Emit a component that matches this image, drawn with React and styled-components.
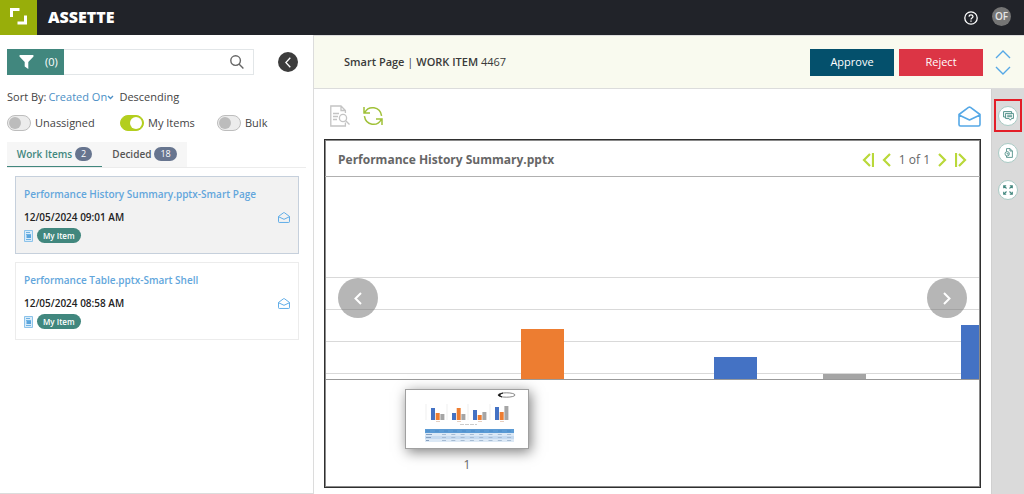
import React, { useState } from "react";
import styled, { createGlobalStyle, css } from "styled-components";

const GlobalStyle = createGlobalStyle`
  * {
    box-sizing: border-box;
  }
  body {
    margin: 0;
    background-color: #fff;
    color: #444;
    font-family: "Open Sans", "Noto Sans", sans-serif;
    font-size: 11px;
    line-height: 16px;
  }
  button, input, select {
    font: inherit;
    color: inherit;
    margin: 0;
    padding: 0;
    border: none;
    background: none;
  }
  button {
    cursor: pointer;
  }
  svg {
    display: block;
  }
`;

const Page = styled.div`
  display: flex;
  flex-direction: column;
  min-height: 100vh;
`;

const Header = styled.header`
  display: flex;
  align-items: center;
  height: 35px;
  padding-right: 13px;
  background: #212329;
  color: #fff;
`;

const LogoBox = styled.div`
  width: 37px;
  height: 35px;
  background: #98ae0a;
`;

const Brand = styled.h1`
  flex: 1;
  margin: 0 0 2px 11px;
  font-size: 16px;
  font-weight: 800;
  line-height: 20px;
`;

const Avatar = styled.button`
  width: 19px;
  height: 19px;
  margin: 0 0 2px 14px;
  border-radius: 50%;
  background: #757575;
  color: #e6e6e6;
  font-size: 10px;
  font-weight: 600;
  line-height: 19px;
`;

const Body = styled.div`
  display: flex;
  flex: 1;
`;

const Sidebar = styled.aside`
  width: 314px;
  flex-shrink: 0;
  padding: 14px 7px 0;
  border-right: 1px solid #dcdcdc;
  border-bottom: 1px solid #dcdcdc;
`;

const SearchRow = styled.div`
  display: flex;
  align-items: center;
  justify-content: space-between;
  padding-right: 8px;
`;

const SearchBox = styled.div`
  display: flex;
  align-items: center;
  width: 247px;
  height: 26px;
  padding-right: 9px;
  border: 1px solid #e2e6e8;
  border-left: none;
`;

const FilterButton = styled.button`
  display: flex;
  align-items: center;
  gap: 11px;
  width: 57px;
  height: 26px;
  padding-left: 12px;
  background: #41877e;
  color: #fff;
`;

const SearchInput = styled.input`
  flex: 1;
  min-width: 0;
  padding: 0 8px;
  outline: none;
`;

const CollapseButton = styled.button`
  display: flex;
  align-items: center;
  justify-content: center;
  width: 20px;
  height: 20px;
  border-radius: 50%;
  background: #3c3c3c;
  color: #fff;
`;

const SortRow = styled.div`
  display: flex;
  align-items: center;
  margin-top: 14px;
`;

const SortSelect = styled.select`
  appearance: none;
  margin: 0 0 0 2px;
  color: #4c8fc6;
  outline: none;
`;

const SortOrder = styled.button`
  margin-left: 5px;
`;

const ToggleRow = styled.div`
  display: grid;
  grid-template-columns: 113px 97px auto;
  margin-top: 10px;
`;

const ToggleLabel = styled.label`
  display: flex;
  align-items: center;
  gap: 4px;
`;

const Switch = styled.input`
  appearance: none;
  display: flex;
  align-items: center;
  width: 24px;
  height: 16px;
  padding: 0 1px;
  border: 1px solid #bdbdbd;
  border-radius: 8px;
  background: #ececec;

  &::before {
    content: "";
    width: 12px;
    height: 12px;
    border-radius: 50%;
    background: #bcbcbc;
  }
  &:checked {
    justify-content: flex-end;
    border-color: #b3ce1e;
    background: #b3ce1e;
  }
  &:checked::before {
    background: #fff;
  }
`;

const Tabs = styled.div`
  display: flex;
  margin-top: 11px;
  border-bottom: 1px solid #ececec;
`;

const Tab = styled.button`
  display: flex;
  align-items: center;
  justify-content: center;
  gap: 3px;
  width: ${props => props.$width}px;
  height: 25px;
  background: #f6f6f6;
  border-bottom: 1px solid transparent;
  color: #555;
  font-size: 10px;
  font-weight: 600;
  ${props =>
    props.$active &&
    css`
      border-bottom-color: #41877e;
      color: #41877e;
    `}
`;

const Badge = styled.span`
  padding: 0 6px;
  border-radius: 7px;
  background: #67758f;
  color: #fff;
  font-size: 9px;
  font-weight: 400;
  line-height: 14px;
`;

const CardList = styled.div`
  display: flex;
  flex-direction: column;
  gap: 8px;
  padding: 8px 0 8px 8px;
  width: 292px;
`;

const Card = styled.article`
  display: flex;
  flex-direction: column;
  height: 78px;
  padding: 9px 8px 0;
  border: 1px solid ${props => (props.$selected ? "#c6d0dc" : "#ececec")};
  background: ${props => (props.$selected ? "#f2f2f2" : "#fff")};
`;

const CardTitle = styled.a`
  color: #62a6dc;
  font-size: 10px;
  font-weight: 600;
  text-decoration: none;
`;

const CardDate = styled.div`
  display: flex;
  align-items: center;
  justify-content: space-between;
  margin-top: 7px;
  color: #222;
  font-size: 10px;
  font-weight: 600;
`;

const CardTags = styled.div`
  display: flex;
  align-items: center;
  gap: 4px;
  margin-top: 3px;
`;

const Pill = styled.span`
  padding: 0 6px;
  border-radius: 8px;
  background: #41877e;
  color: #fff;
  font-size: 8px;
  font-weight: 600;
  line-height: 15px;
`;

const Main = styled.main`
  display: flex;
  flex-direction: column;
  flex: 1;
  min-width: 0;
`;

const ActionBar = styled.div`
  display: flex;
  align-items: center;
  height: 54px;
  padding: 0 13px 0 30px;
  border-top: 1px solid #ddd;
  border-bottom: 1px solid #dcdcdc;
  background: #f9faef;
`;

const ItemName = styled.div`
  flex: 1;
  color: #3a3a3a;

  b {
    font-weight: 600;
  }
`;

const ActionButton = styled.button`
  width: 84px;
  height: 27px;
  margin-left: 5px;
  background: ${props => (props.$danger ? "#dc3545" : "#04506c")};
  color: #fff;
`;

const Stepper = styled.div`
  display: flex;
  flex-direction: column;
  gap: 7px;
  margin-left: 12px;
`;

const Content = styled.div`
  display: flex;
  flex: 1;
`;

const Workspace = styled.div`
  display: flex;
  flex-direction: column;
  flex: 1;
  min-width: 0;
  padding: 16px 10px 6px;
`;

const Toolbar = styled.div`
  display: flex;
  align-items: center;
  gap: 13px;
  height: 22px;
  padding: 0 0 0 6px;

  button:last-child {
    margin-left: auto;
  }
`;

const Viewer = styled.section`
  display: flex;
  flex-direction: column;
  flex: 1;
  margin-top: 12px;
  border: 1px solid #2f2f2f;
  box-shadow: inset 0 0 0 1px #8a8a8a;
`;

const ViewerHeader = styled.div`
  display: flex;
  align-items: center;
  justify-content: space-between;
  height: 37px;
  padding: 4px 13px 0;
  border-bottom: 1px solid #b0b0b0;
`;

const ViewerTitle = styled.h2`
  margin: 0;
  color: #666;
  font-size: 12px;
  font-weight: 700;
`;

const Pager = styled.div`
  display: flex;
  align-items: center;
  gap: 8px;
  color: #666;
  font-size: 12px;
`;

const Stage = styled.div`
  position: relative;
  height: 203px;
  margin: 0 1px;
  overflow: hidden;
`;

const SlideButton = styled.button`
  position: absolute;
  top: 101px;
  ${props => props.$side}: 12px;
  display: flex;
  align-items: center;
  justify-content: center;
  width: 40px;
  height: 40px;
  border-radius: 50%;
  background: rgba(110, 110, 110, 0.5);
  color: #fff;
`;

const Thumbs = styled.div`
  padding: 9px 0 10px 80px;
`;

const Thumb = styled.button`
  display: flex;
  flex-direction: column;
  align-items: center;
  gap: 8px;
  color: #666;
  font-size: 12px;
`;

const Slide = styled.div`
  width: 124px;
  height: 60px;
  border: 1px solid #a0a0a0;
  background: #fff;
  box-shadow: 2px 3px 12px rgba(0, 0, 0, 0.5);
`;

const Rail = styled.nav`
  display: flex;
  flex-direction: column;
  align-items: center;
  gap: 4px;
  width: 33px;
  padding-top: 10px;
  border-left: 1px solid #d0d0d0;
  background: #dadada;
`;

const RailItem = styled.button`
  display: flex;
  align-items: center;
  justify-content: center;
  width: 28px;
  height: 33px;
  border: 2px solid ${props => (props.$marked ? "#e31e28" : "transparent")};
`;

const RailDisc = styled.span`
  display: flex;
  align-items: center;
  justify-content: center;
  width: 20px;
  height: 20px;
  border: 1px solid #a9cbc5;
  border-radius: 50%;
  background: #fff;
  color: #41877e;
`;

const Stroke = ({ w, h, box, width = 1, color = "currentColor", children }) => (
  <svg
    width={w}
    height={h}
    viewBox={box || `0 0 ${w} ${h}`}
    fill="none"
    stroke={color}
    strokeWidth={width}
    aria-hidden="true"
  >
    {children}
  </svg>
);

const Envelope = ({ w, h, width }) => (
  <Stroke w={w} h={h} box="0 0 23 21" width={width} color="#55a8e6">
    <path
      d="M1 8.5 10.5 1.4Q11.5.8 12.5 1.4L22 8.5V18.5Q22 20 20.5 20H2.5Q1 20 1 18.5ZM1 9 11.5 14 22 9"
      strokeLinejoin="round"
    />
  </Stroke>
);

const DocIcon = () => (
  <svg width="9" height="12" viewBox="0 0 9 12" aria-hidden="true">
    <path d="M.5 .5H8.5V11.5H.5Z" fill="#d9ecfa" stroke="#8cc3ea" />
    <path d="M2 2.5H6M2 4.5H7M2 9.5H7" stroke="#6fb2e2" />
    <path d="M2.5 5H7V8H2.5Z" fill="#5aa5dd" />
  </svg>
);

const BLUE = "#4472c4";
const ORANGE = "#ed7d31";
const GRAY = "#a5a5a5";

const gridLines = [100, 132, 164, 196];

const bars = [
  { x: 195, y: 152, color: ORANGE },
  { x: 388, y: 180, color: BLUE },
  { x: 497, y: 197, color: GRAY },
  { x: 635, y: 148, color: BLUE }
];

const miniGroups = [
  { x: 25, heights: [12, 7, 6] },
  { x: 46, heights: [7, 12, 6] },
  { x: 67, heights: [10, 5, 8] },
  { x: 89, heights: [13, 8, 14] }
];

const items = [
  { title: "Performance History Summary.pptx-Smart Page", date: "12/05/2024 09:01 AM" },
  { title: "Performance Table.pptx-Smart Shell", date: "12/05/2024 08:58 AM" }
];

const Chart = () => (
  <svg width="100%" height="203" role="img" aria-label="Performance chart">
    {gridLines.map(y => (
      <rect key={y} x="0" y={y} width="100%" height="1" fill="#d9d9d9" />
    ))}
    {bars.map(bar => (
      <rect
        key={bar.x}
        x={bar.x}
        y={bar.y}
        width="43"
        height={202 - bar.y}
        fill={bar.color}
      />
    ))}
    <rect x="0" y="202" width="100%" height="1" fill="#999" />
  </svg>
);

const SlidePreview = () => (
  <svg width="122" height="58" viewBox="0 0 122 58" aria-hidden="true">
    <ellipse cx="100.5" cy="5" rx="8.5" ry="2.2" fill="none" stroke="#555" strokeWidth=".7" />
    <path d="M97 3Q88 5 96 7Q91.5 5 97 3Z" fill="#111" stroke="#111" strokeWidth=".6" />
    {miniGroups.map(group =>
      group.heights.map((height, i) => (
        <rect
          key={`${group.x}-${i}`}
          x={group.x + i * 4.7}
          y={30 - height}
          width="4"
          height={height}
          fill={[BLUE, ORANGE, GRAY][i]}
        />
      ))
    )}
    <path d="M20 14V30M41 14V30M62 14V30M84 14V30" stroke="#ddd" strokeWidth=".5" />
    <path d="M30 31.5H34M51 31.5H55M72 31.5H76M94 31.5H98" stroke="#e6cfc0" />
    <path d="M54 34.5H71" stroke="#ccc" strokeDasharray="4 1" />
    <rect x="19" y="39" width="89" height="4" fill="#5b9bd5" />
    <rect x="19" y="43" width="89" height="9" fill="#dce9f6" />
    <rect x="19" y="46" width="89" height="3" fill="#c5daf0" />
    <path d="M20 44.5H26M20 47.5H25M20 50.5H23" stroke="#86a0c0" />
    <path
      d="M36 44.5H107M36 47.5H107M36 50.5H107"
      stroke="#a6bcd4"
      strokeDasharray="4 5.3"
    />
    <path d="M20 41H107" stroke="#4c8bc8" strokeDasharray="4 5" />
  </svg>
);

const App = () => {
  const [toggles, setToggles] = useState({
    Unassigned: false,
    "My Items": true,
    Bulk: false
  });

  return (
    <Page>
      <GlobalStyle />
      <Header>
        <LogoBox>
          <Stroke w={37} h={35} width={3} color="#fff">
            <path d="M11.5 17V9.5H19.5M25.5 15.5V23H17.5" />
          </Stroke>
        </LogoBox>
        <Brand>ASSETTE</Brand>
        <button type="button" aria-label="Help">
          <Stroke w={14} h={14} width={1.3}>
            <circle cx="7" cy="7" r="6.2" />
            <path d="M5 5.6Q5.1 3.8 7 3.8T9 5.5Q9 6.3 8 7T7 8.5M7 9.5V10.8" />
          </Stroke>
        </button>
        <Avatar type="button">OF</Avatar>
      </Header>

      <Body>
        <Sidebar>
          <SearchRow>
            <SearchBox>
              <FilterButton type="button">
                <svg width="15" height="14" viewBox="0 0 15 14" aria-hidden="true">
                  <path d="M.8 0H14.2Q15 1 14.3 1.8L9.3 7V14L5.7 11.5V7L.7 1.8Q0 1 .8 0Z" fill="#fff" />
                </svg>
                (0)
              </FilterButton>
              <SearchInput type="text" aria-label="Search" />
              <Stroke w={14} h={14} width={1.4} color="#666">
                <circle cx="5.6" cy="5.6" r="4.8" />
                <path d="M9 9 13.4 13.4" />
              </Stroke>
            </SearchBox>
            <CollapseButton type="button" aria-label="Collapse">
              <Stroke w={6} h={11} width={1.3}>
                <path d="M5.3 .7.8 5.5 5.3 10.3" />
              </Stroke>
            </CollapseButton>
          </SearchRow>

          <SortRow>
            <label htmlFor="sort">Sort By:</label>
            <SortSelect id="sort">
              <option>Created On</option>
            </SortSelect>
            <Stroke w={7} h={5} width={1.3} color="#4c8fc6">
              <path d="M1 1 3.5 3.5 6 1" />
            </Stroke>
            <SortOrder type="button">Descending</SortOrder>
          </SortRow>

          <ToggleRow>
            {Object.keys(toggles).map(name => (
              <ToggleLabel key={name}>
                <Switch
                  type="checkbox"
                  checked={toggles[name]}
                  onChange={event =>
                    setToggles({ ...toggles, [name]: event.target.checked })
                  }
                />
                {name}
              </ToggleLabel>
            ))}
          </ToggleRow>

          <Tabs role="tablist">
            <Tab type="button" role="tab" aria-selected="true" $width={95} $active>
              Work Items <Badge>2</Badge>
            </Tab>
            <Tab type="button" role="tab" aria-selected="false" $width={85}>
              Decided <Badge>18</Badge>
            </Tab>
          </Tabs>

          <CardList>
            {items.map((item, index) => (
              <Card key={item.title} $selected={index === 0}>
                <CardTitle href="#">{item.title}</CardTitle>
                <CardDate>
                  {item.date}
                  <Envelope w={12} h={11} width={1.8} />
                </CardDate>
                <CardTags>
                  <DocIcon />
                  <Pill>My Item</Pill>
                </CardTags>
              </Card>
            ))}
          </CardList>
        </Sidebar>

        <Main>
          <ActionBar>
            <ItemName>
              <b>Smart Page</b> | <b>WORK ITEM</b> 4467
            </ItemName>
            <ActionButton type="button">Approve</ActionButton>
            <ActionButton type="button" $danger>
              Reject
            </ActionButton>
            <Stepper>
              <button type="button" aria-label="Previous item">
                <Stroke w={16} h={9} width={1.4} color="#55a8e6">
                  <path d="M1 8 8 1 15 8" />
                </Stroke>
              </button>
              <button type="button" aria-label="Next item">
                <Stroke w={16} h={9} width={1.4} color="#55a8e6">
                  <path d="M1 1 8 8 15 1" />
                </Stroke>
              </button>
            </Stepper>
          </ActionBar>

          <Content>
            <Workspace>
              <Toolbar>
                <button type="button" aria-label="Preview">
                  <Stroke w={20} h={22} width={1.3} color="#c4c4c4">
                    <path d="M15.4 8V5.5L11 1H.8V21H15.4V17.5M11 1V5.5H15.4M3 8.5H9M3 11.5H8M3 14.5H7" />
                    <circle cx="13" cy="13" r="3.6" />
                    <path d="M15.7 15.7 19.5 19.5" />
                  </Stroke>
                </button>
                <button type="button" aria-label="Refresh">
                  <Stroke w={20} h={20} width={1.5} color="#a0c138">
                    <path d="M1.8 6.5C5.5-.8 17 .2 18.6 9.8M1 1V7H7M18.2 13.5C14.5 20.8 3 19.8 1.4 10.2M19 19V13H13" />
                  </Stroke>
                </button>
                <button type="button" aria-label="Mark as unread">
                  <Envelope w={23} h={21} width={1.6} />
                </button>
              </Toolbar>

              <Viewer>
                <ViewerHeader>
                  <ViewerTitle>Performance History Summary.pptx</ViewerTitle>
                  <Pager>
                    <button type="button" aria-label="First page">
                      <Stroke w={12} h={14} width={2.2} color="#b9d83a">
                        <path d="M8 1 2 7 8 13M11 0V14" />
                      </Stroke>
                    </button>
                    <button type="button" aria-label="Previous page">
                      <Stroke w={9} h={14} width={2.2} color="#b9d83a">
                        <path d="M8 1 2 7 8 13" />
                      </Stroke>
                    </button>
                    <span>1 of 1</span>
                    <button type="button" aria-label="Next page">
                      <Stroke w={9} h={14} width={2.2} color="#b9d83a">
                        <path d="M1 1 7 7 1 13" />
                      </Stroke>
                    </button>
                    <button type="button" aria-label="Last page">
                      <Stroke w={12} h={14} width={2.2} color="#b9d83a">
                        <path d="M4 1 10 7 4 13M1 0V14" />
                      </Stroke>
                    </button>
                  </Pager>
                </ViewerHeader>
                <Stage>
                  <Chart />
                  <SlideButton type="button" $side="left" aria-label="Previous slide">
                    <Stroke w={8} h={13} width={2}>
                      <path d="M7 1 1.5 6.5 7 12" />
                    </Stroke>
                  </SlideButton>
                  <SlideButton type="button" $side="right" aria-label="Next slide">
                    <Stroke w={8} h={13} width={2}>
                      <path d="M1 1 6.5 6.5 1 12" />
                    </Stroke>
                  </SlideButton>
                </Stage>
                <Thumbs>
                  <Thumb type="button">
                    <Slide>
                      <SlidePreview />
                    </Slide>
                    1
                  </Thumb>
                </Thumbs>
              </Viewer>
            </Workspace>

            <Rail>
              <RailItem type="button" aria-label="Comments" $marked>
                <RailDisc>
                  <Stroke w={11} h={10} width={0.9}>
                    <path d="M2.5 6H.6V.6H8.6V2.2M2.6 2.4H10.4V7.4H8.6L7.4 9.2 6 7.4H2.6ZM4.2 4.2H9M4.2 5.7H9" />
                  </Stroke>
                </RailDisc>
              </RailItem>
              <RailItem type="button" aria-label="Versions">
                <RailDisc>
                  <Stroke w={9} h={10} width={0.8}>
                    <path d="M2.5 3.5V.6H6L8.4 3V9.4H2.5V8M6 .6V3H8.4" />
                    <circle cx="3.2" cy="5.8" r="2.2" />
                    <path d="M3.2 4.8V6H5" />
                  </Stroke>
                </RailDisc>
              </RailItem>
              <RailItem type="button" aria-label="Full screen">
                <RailDisc>
                  <Stroke w={10} h={10} width={1.1}>
                    <path d="M.7 3.2V.7H3.2M.7 .7 3.5 3.5M6.8 .7H9.3V3.2M9.3 .7 6.5 3.5M9.3 6.8V9.3H6.8M9.3 9.3 6.5 6.5M3.2 9.3H.7V6.8M.7 9.3 3.5 6.5" />
                  </Stroke>
                </RailDisc>
              </RailItem>
            </Rail>
          </Content>
        </Main>
      </Body>
    </Page>
  );
};

export default App;
